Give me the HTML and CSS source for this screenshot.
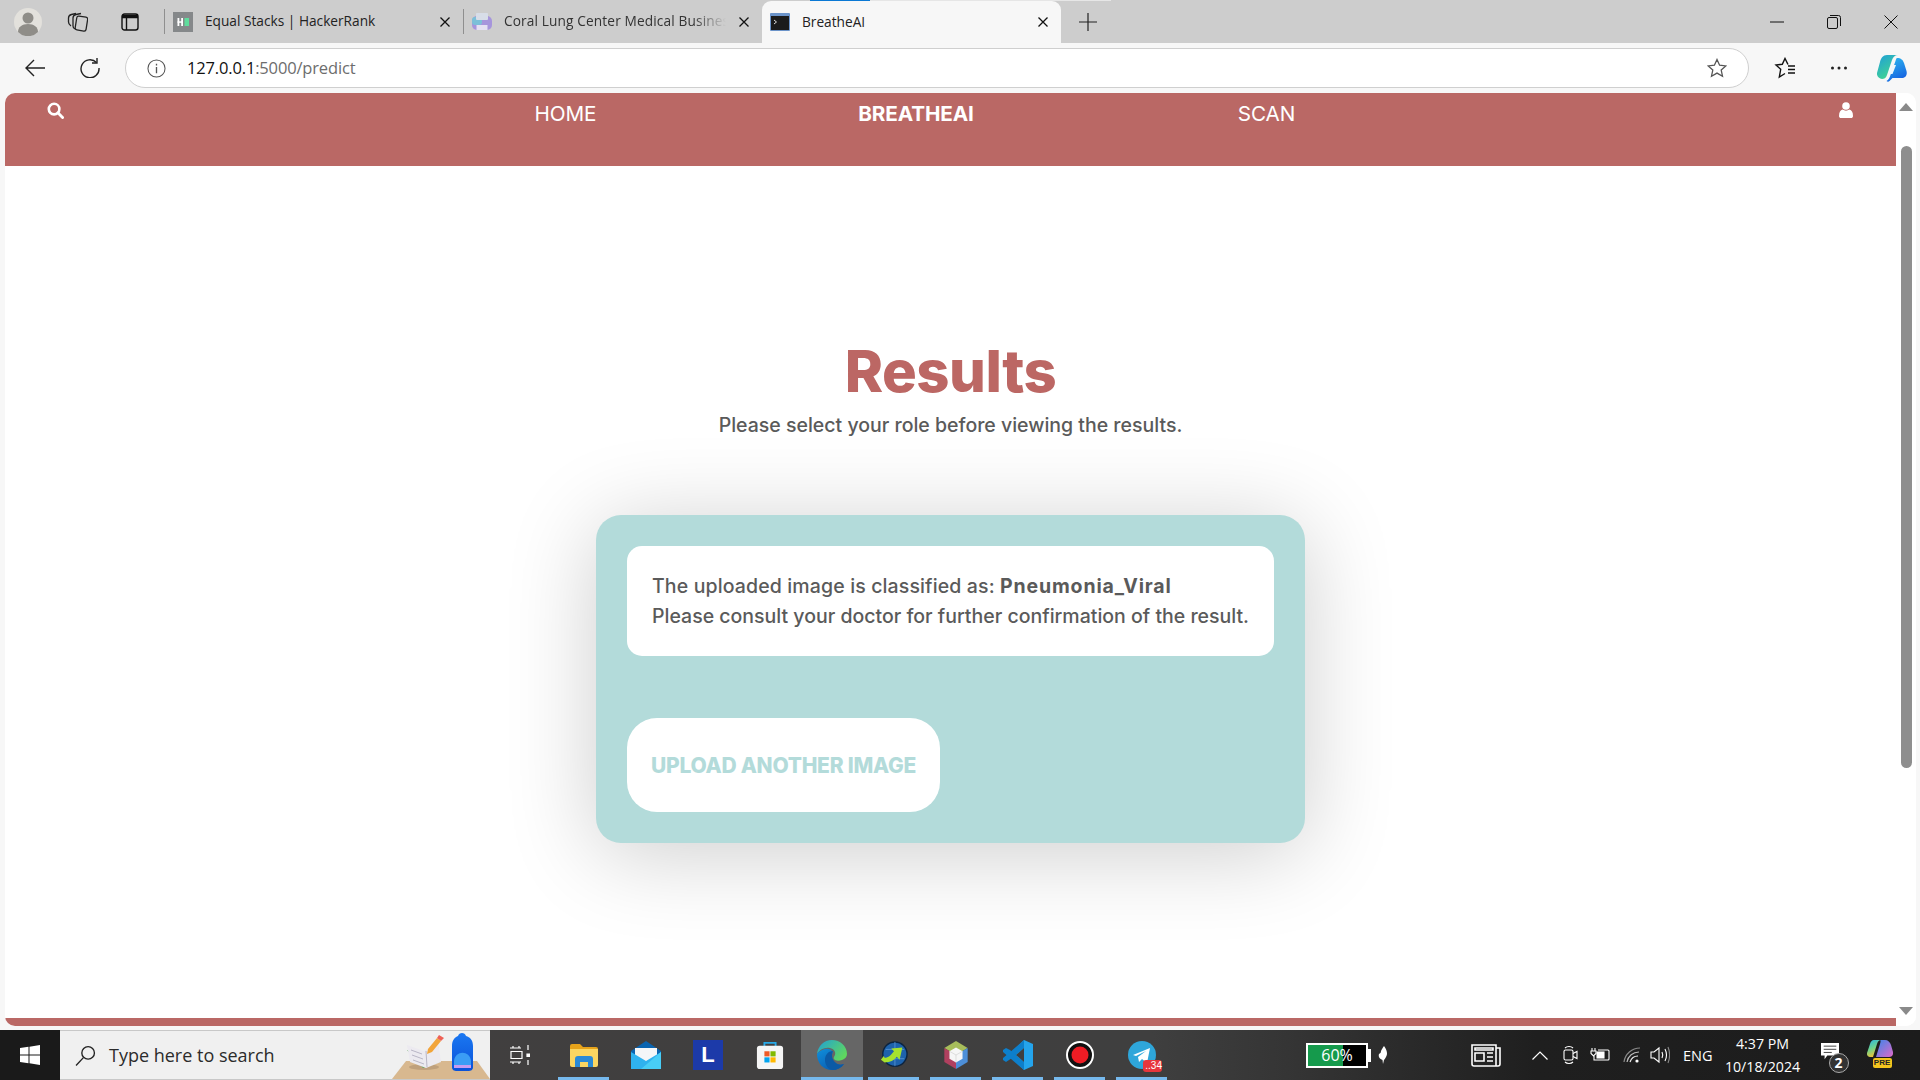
FILE: index.html
```html
<!DOCTYPE html>
<html lang="en">
<head>
<meta charset="utf-8">
<title>BreatheAI</title>
<link rel="stylesheet" href="styles.css">
</head>
<body>
<svg class="defs" width="0" height="0">
  <defs>
    <linearGradient id="cpL" x1="0" y1="0" x2="0.6" y2="1"><stop offset="0" stop-color="#1f9fd8"/><stop offset="1" stop-color="#43d690"/></linearGradient>
    <linearGradient id="cpR" x1="0.2" y1="0" x2="0.6" y2="1"><stop offset="0" stop-color="#2bb6ef"/><stop offset="1" stop-color="#1660e0"/></linearGradient>
    <linearGradient id="edgeA" x1="0" y1="0" x2="1" y2="0.6"><stop offset="0" stop-color="#1fa0d8"/><stop offset="1" stop-color="#5fd75f"/></linearGradient>
    <linearGradient id="edgeB" x1="0" y1="0" x2="0.7" y2="1"><stop offset="0" stop-color="#0f8fdc"/><stop offset="1" stop-color="#0a5cb0"/></linearGradient>
    <linearGradient id="pkB" x1="0" y1="0" x2="0" y2="1"><stop offset="0" stop-color="#1b78f2"/><stop offset="1" stop-color="#0a52d8"/></linearGradient>
    <linearGradient id="prL" x1="0" y1="0" x2="0.4" y2="1"><stop offset="0" stop-color="#27b3ea"/><stop offset="0.55" stop-color="#6fd38c"/><stop offset="1" stop-color="#f2c534"/></linearGradient>
    <linearGradient id="prR" x1="0" y1="0" x2="1" y2="1"><stop offset="0" stop-color="#3a86ec"/><stop offset="1" stop-color="#de6ac8"/></linearGradient>
  </defs>
</svg>
<header class="tabstrip">
  <div class="strip-tools">
    <svg class="ico-profile" viewBox="0 0 28 28"><circle cx="14" cy="14" r="14" fill="#e3e1dc"/><circle cx="14" cy="10" r="5.500" fill="#8f8d88"/><path d="M4 24c0-5 4-8 10-8s10 3 10 8a14 14 0 0 1-20 0z" fill="#8f8d88"/></svg>
    <svg class="ico-collections" viewBox="0 0 21 20" fill="none" stroke="#222" stroke-width="1.300"><rect x="9" y="4.500" width="11" height="14" rx="2" transform="rotate(9 14 11)"/><path d="M8 17c-1-.5-2-1.500-2-3V6c0-2 1-3 3-3.500l5-1"/><path d="M4 14c-1.500-1-2.500-2-2.500-4V6c0-2 1-3 3-3.500l4.500-1"/></svg>
    <svg class="ico-vtabs" viewBox="0 0 18 18" fill="none" stroke="#111" stroke-width="1.400"><rect x="1" y="1" width="16" height="16" rx="2.500"/><path d="M1 3.500h16" stroke-width="3.500"/><path d="M5.500 5v12"/></svg>
    <span class="tab-sep"></span>
  </div>
  <div class="tab">
    <svg class="favicon" viewBox="0 0 20 20"><rect width="20" height="20" fill="#85888a"/><rect x="4.500" y="6" width="1.800" height="8" fill="#fff"/><rect x="8.200" y="6" width="1.800" height="8" fill="#fff"/><rect x="4.500" y="9.300" width="5" height="1.500" fill="#fff"/><rect x="11.500" y="6" width="4.500" height="8" fill="#5fdc9c"/></svg>
    <span class="tab-title">Equal Stacks | HackerRank</span>
    <svg class="tab-x" viewBox="0 0 12 12"><path d="M1.500 1.500l9 9M10.500 1.500l-9 9" stroke="#111" stroke-width="1.300"/></svg>
  </div>
  <span class="tab-sep"></span>
  <div class="tab tab-second">
    <svg class="favicon" viewBox="0 0 20 20"><rect y="4" width="20" height="14" rx="5" fill="#a695dc"/><rect x="0" y="5" width="10" height="8" rx="3" fill="#7cc0d8"/><rect x="4" y="1" width="12" height="7" rx="1" fill="#d7dde8"/><rect x="4.500" y="13" width="11" height="5" fill="#e4e0f2"/></svg>
    <span class="tab-title tab-title-fade">Coral Lung Center Medical Business</span>
    <svg class="tab-x" viewBox="0 0 12 12"><path d="M1.500 1.500l9 9M10.500 1.500l-9 9" stroke="#111" stroke-width="1.300"/></svg>
  </div>
  <div class="tab tab-active">
    <span class="loader"></span>
    <svg class="favicon" viewBox="0 0 20 20"><rect y="1" width="20" height="18" rx="1" fill="#6b93c9"/><rect x="1" y="4" width="18" height="14" fill="#1b1b1b"/><path d="M4 8l2.500 2L4 12" stroke="#ddd" fill="none"/></svg>
    <span class="tab-title">BreatheAI</span>
    <svg class="tab-x" viewBox="0 0 12 12"><path d="M1.500 1.500l9 9M10.500 1.500l-9 9" stroke="#111" stroke-width="1.300"/></svg>
  </div>
  <svg class="ico-plus" viewBox="0 0 18 18"><path d="M9 0v18M0 9h18" stroke="#222" stroke-width="1.200"/></svg>
  <div class="win-controls">
    <svg class="win-ico" viewBox="0 0 14 14"><path d="M0 7h14" stroke="#111" stroke-width="1"/></svg>
    <svg class="win-ico" viewBox="0 0 14 14" fill="none" stroke="#111"><rect x=".5" y="2.500" width="10" height="11" rx="1.500"/><path d="M3 .5h8.500a2 2 0 0 1 2 2V11"/></svg>
    <svg class="win-ico" viewBox="0 0 14 14"><path d="M.5.500l13 13M13.500.5l-13 13" stroke="#111"/></svg>
  </div>
</header>

<div class="toolbar">
  <svg class="tb-ico back" viewBox="0 0 20 20" fill="none" stroke="#222" stroke-width="1.400"><path d="M20 10H1M9 2l-8 8 8 8"/></svg>
  <svg class="tb-ico refresh" viewBox="0 0 20 20" fill="none" stroke="#222" stroke-width="1.400"><path d="M16.500 4.500A9 9 0 1 0 19 10"/><path d="M17 0v5h-5"/></svg>
  <div class="address">
    <svg class="info" viewBox="0 0 20 20" fill="none" stroke="#555" stroke-width="1.100"><circle cx="10" cy="10" r="9"/><path d="M10 8.500V15M10 5v1.800" stroke-width="1.400"/></svg>
    <span class="url"><span class="url-host">127.0.0.1</span>:5000/predict</span>
    <svg class="star" viewBox="0 0 20 20" fill="none" stroke="#555" stroke-width="1.300"><path d="M10 1.500l2.600 5.700 6.200.7-4.600 4.200 1.300 6.100-5.500-3.100-5.500 3.100 1.300-6.100L1.200 7.900l6.200-.7z"/></svg>
  </div>
  <svg class="tb-ico favs" viewBox="0 0 22 22" fill="none" stroke="#111" stroke-width="1.400"><path d="M14 7.500L11 1.500 8.300 7.300 2 8l4.700 4.300L5.300 20l5.700-3.500M14 9h7M14 12.500h7M14 16h7"/></svg>
  <svg class="tb-ico more" viewBox="0 0 20 20" fill="#222"><circle cx="3.500" cy="10" r="1.500"/><circle cx="10" cy="10" r="1.500"/><circle cx="16.500" cy="10" r="1.500"/></svg>
  <svg class="tb-ico copilot" viewBox="0 0 30 27">
    <path d="M10 0h11c-3 0-5 2-6 5l-5 15c-1 3-3 4-5 4-3 0-5.500-3-5-6L3 7c1-4 3-7 7-7z" fill="url(#cpL)"/>
    <path d="M20 3c4 0 6 2 7 5l2.500 8c1 4-1 7-5 7h-9l-3 3c-1 1-2 1-3 0 2-1 3-3 4-6l5-14c.5-2 1-3 1.500-3z" fill="url(#cpR)"/>
    <path d="M15 10h4l-3.500 9h-4z" fill="#eef8fc"/>
  </svg>
</div>

<div class="page">
  <div class="content">
    <nav class="nav">
      <span class="nav-cell nav-search">
        <svg class="nav-ico" viewBox="0 0 18 18" fill="none" stroke="#fff" stroke-width="2.800"><circle cx="7.500" cy="7.500" r="5.600"/><path d="M11.500 11.500l5 5" stroke-linecap="round" stroke-width="3"/></svg>
      </span>
      <a class="nav-link">HOME</a>
      <a class="nav-link nav-brand">BREATHEAI</a>
      <a class="nav-link">SCAN</a>
      <span class="nav-cell nav-user">
        <svg class="nav-ico-user" viewBox="0 0 14 16" fill="#fff"><circle cx="7" cy="4" r="3.800"/><path d="M0 14c0-4 1.500-6 3.500-6.500 2 1.500 5 1.500 7 0C12.500 8 14 10 14 14c0 1.500-1 2-2 2H2c-1 0-2-.5-2-2z"/></svg>
      </span>
    </nav>
    <main class="main">
      <h1 class="title">Results</h1>
      <p class="subtitle">Please select your role before viewing the results.</p>
      <section class="card">
        <div class="result">
          <p class="result-line result-lead">The uploaded image is classified as: <strong class="result-strong">Pneumonia_Viral</strong></p>
          <p class="result-line">Please consult your doctor for further confirmation of the result.</p>
        </div>
        <a class="upload-btn">UPLOAD ANOTHER IMAGE</a>
      </section>
    </main>
    <div class="footer-band"></div>
  </div>
  <aside class="scrollbar">
    <span class="arrow-up"></span>
    <span class="thumb"></span>
    <span class="arrow-down"></span>
  </aside>
</div>

<footer class="taskbar">
  <div class="start">
    <svg class="win-logo" viewBox="0 0 20 20" fill="#fff"><path d="M0 3l8.500-1.200V9.500H0zM9.500 1.700L20 0v9.500H9.500zM0 10.500h8.500v7.700L0 17zM9.500 10.500H20V20L9.500 18.300z"/></svg>
  </div>
  <div class="search">
    <svg class="search-ico" viewBox="0 0 20 20" fill="none" stroke="#222" stroke-width="1.300"><circle cx="12.500" cy="7.500" r="6"/><path d="M8 12l-7 7.500"/></svg>
    <span class="search-text">Type here to search</span>
    <svg class="search-art" viewBox="0 0 98 49">
      <path d="M0 49l14-18h71l13 18z" fill="#d8b88f"/>
      <ellipse cx="32" cy="37" rx="15" ry="3" fill="#bfa07c"/>
      <path d="M15 20l16 18 17-6-2-16-15 10z" fill="#5aa35a"/>
      <path d="M15 15l17 6 14-9 3 20-15 6-16-6z" fill="#eceaf0"/>
      <path d="M34 21l1 16M19 20l11 4M20 25l11 4M21 30l11 4" stroke="#b9b6c6" stroke-width="1"/>
      <path d="M36 19l9-11 4 3-9 11-5 2z" fill="#f2a53a"/>
      <path d="M45 8l2-3 5 3-3 3z" fill="#ee6055"/>
      <path d="M60 16c0-6 3-9 6-10 1-4 7-4 8 0 4 1 7 4 7 10v21c0 3-2 4-5 4H65c-3 0-5-1-5-4z" fill="url(#pkB)"/>
      <path d="M62 31c1-11 16-11 17 0v6H62z" fill="#3b9df5"/>
      <path d="M62 35h17v3H62z" fill="#c79cf0"/>
    </svg>
  </div>
  <div class="task-btn task-view">
    <svg class="ico-taskview" viewBox="0 0 20 20" fill="none" stroke="#fff" stroke-width="1.200"><path d="M0 3h11M3 1v2M9 1v2M1 6.500h11v7H1zM0 17h11M3 17v2M9 17v2M18 0v5M18 15v5"/><path d="M17 9h3v2.500h-3z" fill="#fff"/></svg>
  </div>
  <div class="task-btn running">
    <svg class="ico-folder" viewBox="0 0 28 23"><path d="M0 2a2 2 0 0 1 2-2h8l3 3h13a2 2 0 0 1 2 2v3H0z" fill="#e7a31a"/><path d="M0 5h28v16a2 2 0 0 1-2 2H2a2 2 0 0 1-2-2z" fill="#fbd661"/><path d="M5 23v-8a3 3 0 0 1 3-3h12a3 3 0 0 1 3 3v8h-5v-5h-8v5z" fill="#2a8ad6"/></svg>
  </div>
  <div class="task-btn">
    <svg class="ico-mail" viewBox="0 0 30 28"><path d="M0 10L15 0l15 10v18H0z" fill="#0a64b0"/><path d="M4 7h22v10L15 23 4 17z" fill="#f4f6f8"/><path d="M0 11l15 9 15-9v17H0z" fill="#2fb2ef"/><path d="M30 11v17H10z" fill="#48cdf6"/></svg>
  </div>
  <div class="task-btn">
    <span class="l-tile">L</span>
  </div>
  <div class="task-btn">
    <svg class="app-ico" viewBox="0 0 28 30"><path d="M8 6V2h12v4" fill="none" stroke="#27a9e8" stroke-width="2"/><rect y="5" width="28" height="25" rx="3" fill="#f5f5f5"/><rect x="8" y="11" width="5.500" height="5.500" fill="#ef5a27"/><rect x="14.500" y="11" width="5.500" height="5.500" fill="#80ba01"/><rect x="8" y="17.500" width="5.500" height="5.500" fill="#02a4ef"/><rect x="14.500" y="17.500" width="5.500" height="5.500" fill="#ffb902"/></svg>
  </div>
  <div class="task-btn running active">
    <svg class="ico-edge" viewBox="0 0 30 30">
      <path d="M15 0C7 0 1 6 0 14c3-5 8-7 13-6 4 1 6 4 5 7-1 2-2 3-1 4 1 2 5 2 8 1 3-1 5-3 5-6C30 6 23 0 15 0z" fill="url(#edgeA)"/>
      <path d="M0 14c0 9 6 16 15 16 5 0 9-2 12-6-2 1-5 1-7 0-4-2-7-7-4-12-2-3-5-4-8-3-4 1-7 3-8 5z" fill="url(#edgeB)"/>
      <path d="M8 20c0-5 3-9 8-9-2 4-1 9 3 12 2 2 5 2 8 1-3 4-7 6-12 6-4-1-7-5-7-10z" fill="#0b5aa6"/>
    </svg>
  </div>
  <div class="task-btn running">
    <svg class="app-ico" viewBox="0 0 28 30"><circle cx="15" cy="14" r="13" fill="#1d62ac"/><circle cx="15" cy="14" r="13" fill="none" stroke="#0c2440" stroke-width="1.500"/><path d="M5 9h20M5 19h20M15 1v26" stroke="#5f9ad6" stroke-width=".8"/><path d="M0 20l4 3c6 0 10-2 13-6l3 3 3-13-12 1 3 3c-3 4-6 7-10 7l-1-2z" fill="#a6e22e"/></svg>
  </div>
  <div class="task-btn running">
    <svg class="app-ico" viewBox="0 0 27 30"><path d="M13.500 0L26 7.500 13.500 15 1 7.500z" fill="#a7bd5b"/><path d="M1 7.500l12.500 7.500v15L1 22.500z" fill="#b0405f"/><path d="M26 7.500L13.500 15v15L26 22.500z" fill="#4d8fd8"/><path d="M13.500 7l7 4v8l-7 4-7-4v-8z" fill="#f6f6f6"/><path d="M6.500 11l7 4 7-4M13.500 15v8" stroke="#d0d0d0" fill="none" stroke-width=".7"/></svg>
  </div>
  <div class="task-btn running">
    <svg class="ico-vs" viewBox="0 0 30 30"><path d="M21 0l-8 8 0 14 8 8 9-4V4z" fill="#24a4ec"/><path d="M21 0v8L9 18l-6 4-3-2v-2l6-5 15-13z" fill="#0d7fcb"/><path d="M3 8L0 10v2l15 13 6 5v-8L7 10z" fill="#0d7fcb"/><path d="M21 8l-8 7 8 7z" fill="#3f3f3f"/></svg>
  </div>
  <div class="task-btn running">
    <svg class="app-ico" viewBox="0 0 28 28"><circle cx="14" cy="14" r="13" fill="#111" stroke="#fff" stroke-width="2"/><circle cx="14" cy="14" r="8.500" fill="#ee1c24"/></svg>
  </div>
  <div class="task-btn running tg">
    <svg class="app-ico" viewBox="0 0 28 28"><circle cx="14" cy="14" r="14" fill="#2ea6da"/><path d="M5 14l17-7-3 15-5-4-3 3-1-5 8-6-10 5z" fill="#fff"/></svg>
    <span class="tg-badge">..34</span>
  </div>
  <div class="taskbar-space"></div>
  <div class="tray">
    <div class="battery-wrap"><div class="battery"><span class="battery-text">60%</span></div><span class="battery-cap"></span></div>
    <svg class="tray-feather" viewBox="0 0 10 18" fill="#fff"><path d="M6 0c3 4 4 8 2 11-1 2-2 3-2 3l-1 4-.5-4C2 13 0 11 1 8c1-1 2-1 2-3 1-2 2-4 3-5z"/></svg>
    <svg class="tray-news" viewBox="0 0 30 24" fill="none" stroke="#fff" stroke-width="1.600"><path d="M1 2h24v21H3a2 2 0 0 1-2-2zM25 5h4v16a2 2 0 0 1-2 2h-2M4 5h18v2H4zM4 10h9v8H4zM16 10h6M16 14h6M16 18h6"/></svg>
    <svg class="tray-chev" viewBox="0 0 16 9" fill="none" stroke="#fff" stroke-width="1.200"><path d="M.5 8.500L8 1l7.500 7.500"/></svg>
    <svg class="tray-cam" viewBox="0 0 15 20" fill="none" stroke="#fff" stroke-width="1.100"><rect x="1" y="5" width="9" height="10" rx="1.500"/><path d="M10 8.500l4-2v7l-4-2M2 3c2-2 6-2 8 0M2 17c2 2 6 2 8 0"/></svg>
    <svg class="tray-bat" viewBox="0 0 20 14" fill="none" stroke="#fff" stroke-width="1.100"><path d="M8 2h10a1 1 0 0 1 1 1v8a1 1 0 0 1-1 1H4V8"/><rect x="7" y="4" width="7" height="6" fill="#fff"/><path d="M2 0v3M5 0v3M1 3h5v2.500L3.500 8 1 5.500z"/></svg>
    <svg class="tray-wifi" viewBox="0 0 18 16" fill="none" stroke="#8a8a8a" stroke-width="1.200"><path d="M1 15C2 7 9 1 17 1"/><path d="M4 15c1-6 6-10 12-10" stroke="#bbb"/><path d="M7 15c1-3 4-6 8-6" stroke="#eee"/><circle cx="14" cy="14" r="1.600" fill="#fff" stroke="none"/></svg>
    <svg class="tray-sound" viewBox="0 0 20 18" fill="none" stroke="#fff" stroke-width="1.100"><path d="M1 6h3l5-4v14l-5-4H1z"/><path d="M12 6c1 2 1 4 0 6M15 3c2 4 2 8 0 12"/><path d="M18 1c2 5 2 11 0 16" stroke="#888"/></svg>
    <span class="tray-lang">ENG</span>
    <div class="clock"><span class="clock-time">4:37 PM</span><span class="clock-date">10/18/2024</span></div>
    <div class="notify">
      <svg class="notify-ico" viewBox="0 0 20 20"><path d="M0 0h20v14H7l-3 4v-4H0z" fill="#fff"/><path d="M3 3.500h14M3 7h14M3 10.500h9" stroke="#333"/></svg>
      <span class="notify-badge">2</span>
    </div>
    <div class="copilot-pre">
      <svg class="copilot-ico" viewBox="0 0 26 20">
        <path d="M7 0h7c-2 0-3 1-4 4L6 17H3c-2 0-3.500-2-3-4L3 4c.5-2 2-4 4-4z" fill="url(#prL)"/>
        <path d="M13 0h5c3 0 5 2 6 5l2 7c.5 3-1 5-4 5H9l4-13c.5-2 1-4 0-4z" fill="url(#prR)"/>
      </svg>
      <span class="pre-tag">PRE</span>
    </div>
  </div>
</footer>
</body>
</html>
```

FILE: styles.css
```css
* { box-sizing: border-box; }
html, body { margin: 0; height: 100%; }
body {
  display: flex;
  flex-direction: column;
  height: 100vh;
  overflow: hidden;
  background: #f7f7f7;
  font-family: "Open Sans", "Noto Sans", sans-serif;
}
.defs { position: absolute; }

/* tab strip */
.tabstrip {
  height: 43px;
  flex: none;
  display: flex;
  align-items: center;
  background: #cdcdcd;
}
.strip-tools { display: flex; align-items: center; padding-left: 14px; }
.ico-profile { width: 28px; height: 28px; }
.ico-collections { width: 21px; height: 20px; margin-left: 25px; }
.ico-vtabs { width: 18px; height: 18px; margin-left: 33px; }
.strip-tools .tab-sep { margin-left: 25px; margin-right: 7px; }
.tab-sep { width: 1px; height: 25px; background: #8f8f8f; flex: none; }
.tab {
  width: 291px;
  height: 43px;
  flex: none;
  display: flex;
  align-items: center;
  position: relative;
  padding-left: 1px;
}
.tab-second { padding-left: 8px; width: 298px; }
.tab-active {
  width: 299px;
  height: 42px;
  margin-top: 1px;
  background: #f7f7f7;
  border-radius: 9px 9px 0 0;
  padding-left: 8px;
}
.favicon { width: 20px; height: 20px; flex: none; }
.tab-title { margin-left: 12px; padding-bottom: 2px; font-size: 13.700px; color: #222; white-space: nowrap; flex: 1; min-width: 0; overflow: hidden; }
.tab-title-fade { color: #333; letter-spacing: .12px; -webkit-mask-image: linear-gradient(90deg, #000 85%, transparent 100%); mask-image: linear-gradient(90deg, #000 85%, transparent 100%); margin-right: 12px; }
.tab-x { width: 12px; height: 12px; flex: none; margin-right: 12px; }
.loader {
  position: absolute;
  left: 48px;
  top: -1px;
  width: 301px;
  height: 1px;
  background: linear-gradient(90deg, #0a78d4 0 60px, #e6e6e6 60px);
}
.ico-plus { width: 18px; height: 18px; margin-left: 18px; }
.win-controls { margin-left: auto; display: flex; align-items: center; gap: 43px; padding-right: 22px; }
.win-ico { width: 14px; height: 14px; }

/* toolbar */
.toolbar {
  height: 50px;
  flex: none;
  display: flex;
  align-items: center;
  background: #f7f7f7;
  padding-left: 25px;
}
.tb-ico { flex: none; }
.back { width: 20px; height: 20px; }
.refresh { width: 20px; height: 20px; margin-left: 35px; }
.address {
  width: 1624px;
  height: 40px;
  margin-left: 25px;
  flex: none;
  display: flex;
  align-items: center;
  background: #fff;
  border: 1px solid #cfcfcf;
  border-radius: 20px;
  padding: 0 21px 0 21px;
}
.info { width: 19px; height: 19px; flex: none; }
.url { margin-left: 21px; padding-bottom: 2px; font-size: 16.500px; color: #6d6d6d; letter-spacing: -.16px; }
.url-host { color: #111; }
.star { width: 20px; height: 20px; margin-left: auto; }
.favs { width: 22px; height: 22px; margin-left: 25px; }
.more { width: 20px; height: 20px; margin-left: 33px; }
.copilot { width: 30px; height: 27px; margin-left: 28px; }

/* page */
.page {
  flex: 1;
  min-height: 0;
  margin: 0 4px 4px 5px;
  display: flex;
  background: #fff;
  border-radius: 10px;
  overflow: hidden;
}
.content { flex: 1; min-width: 0; display: flex; flex-direction: column; }
.nav {
  height: 73px;
  flex: none;
  display: grid;
  grid-template-columns: 385px 351px 350px 351px 1fr;
  align-items: start;
  background: #ba6865;
  color: #fff;
  font-family: Inter, "Liberation Sans", sans-serif;
}
.nav-cell { display: flex; }
.nav-search { padding: 9px 0 0 42px; }
.nav-user { justify-content: flex-end; padding: 9px 43px 0 0; }
.nav-ico { width: 17px; height: 17px; }
.nav-ico-user { width: 14px; height: 16px; }
.nav-link { text-align: center; font-size: 20.700px; line-height: 26px; padding-top: 8px; letter-spacing: -.1px; }
.nav-brand { font-weight: 700; letter-spacing: -.1px; }

.main { flex: 1; min-height: 0; display: flex; flex-direction: column; align-items: center; font-family: Inter, "Liberation Sans", sans-serif; }
.title {
  margin: 170px 0 0;
  font-size: 58px;
  line-height: 70px;
  font-weight: 800;
  color: #bc6764;
  letter-spacing: -.5px;
}
.subtitle { margin: 5px 0 0; font-size: 19.500px; line-height: 28px; color: #5a5a5a; font-weight: 500; }
.card {
  width: 709px;
  height: 328px;
  margin-top: 76px;
  padding: 31px;
  background: #b3dbda;
  border-radius: 25px;
  box-shadow: 0 10px 90px rgba(0, 0, 0, .2);
  display: flex;
  flex-direction: column;
  align-items: flex-start;
}
.result { width: 100%; height: 110px; padding: 25px; background: #fff; border-radius: 15px; }
.result-line { margin: 0; font-size: 19.500px; line-height: 30px; color: #5a5a5a; font-weight: 500; white-space: nowrap; }
.result-lead { letter-spacing: .13px; }
.result-strong { font-weight: 700; letter-spacing: .85px; }
.upload-btn {
  width: 313px;
  height: 94px;
  margin-top: 62px;
  display: flex;
  align-items: center;
  justify-content: center;
  background: #fff;
  border-radius: 30px;
  color: #b3dbda;
  font-size: 21px;
  font-weight: 800;
  letter-spacing: -.25px;
  white-space: nowrap;
}
.footer-band { height: 8px; flex: none; background: #ba6865; }

.scrollbar {
  width: 20px;
  flex: none;
  display: flex;
  flex-direction: column;
  align-items: center;
  background: #fff;
  padding: 10px 0 11px;
}
.arrow-up, .arrow-down { width: 0; height: 0; border-left: 7px solid transparent; border-right: 7px solid transparent; flex: none; }
.arrow-up { border-bottom: 8px solid #8a8a8a; }
.arrow-down { border-top: 8px solid #8a8a8a; margin-top: auto; }
.thumb { width: 11px; height: 622px; margin-top: 35px; background: #8e8e8e; border-radius: 6px; flex: none; }

/* taskbar */
.taskbar {
  height: 50px;
  flex: none;
  display: flex;
  align-items: stretch;
  background: linear-gradient(90deg, #423f3f 0, #3f3f3f 60%, #353535 67%, #1f1f1f 80%, #1c1c1c 100%);
  color: #fff;
}
.start { width: 60px; display: flex; align-items: center; justify-content: center; background: #1a1a1a; }
.win-logo { width: 20px; height: 20px; }
.search {
  width: 430px;
  display: flex;
  align-items: center;
  position: relative;
  background: #f0f0f0;
  border-top: 1px solid #c8c8c8;
  border-bottom: 1px solid #c8c8c8;
  padding-left: 15px;
}
.search-ico { width: 21px; height: 21px; flex: none; }
.search-text { margin-left: 13px; font-size: 18px; color: #2b2b2b; }
.search-art { position: absolute; right: 0; bottom: 0; width: 98px; height: 49px; }
.task-btn {
  width: 62px;
  display: flex;
  align-items: center;
  justify-content: center;
  position: relative;
  flex: none;
}
.task-view { width: 63px; padding-right: 3px; }
.task-btn.running::after {
  content: "";
  position: absolute;
  left: 5px;
  right: 6px;
  bottom: 0;
  height: 3px;
  background: #76b9ed;
}
.task-btn.active { background: #666; }
.task-btn.active::after { left: 0; right: 0; }
.app-ico { width: 28px; height: 28px; }
.ico-taskview { width: 20px; height: 20px; }
.ico-folder { width: 28px; height: 23px; }
.ico-mail { width: 30px; height: 28px; }
.ico-edge { width: 30px; height: 30px; }
.ico-vs { width: 30px; height: 30px; }
.l-tile {
  width: 30px;
  height: 30px;
  display: flex;
  align-items: center;
  justify-content: center;
  background: #1c3aa9;
  color: #fff;
  font: 700 22px "Liberation Sans", sans-serif;
}
.tg-badge {
  position: absolute;
  left: 32px;
  top: 30px;
  width: 19px;
  height: 12px;
  background: #e7363c;
  border-radius: 3px;
  color: #fff;
  font: 10px/12px "Liberation Sans", sans-serif;
  text-align: right;
  white-space: nowrap;
}
.taskbar-space { flex: 1; }
.tray { width: 614px; flex: none; display: flex; align-items: center; position: relative; }
.battery-wrap { display: flex; align-items: center; }
.battery {
  width: 62px;
  height: 25px;
  background: linear-gradient(90deg, #159a4c 0 60%, #000 60%);
  border: 2px solid #fff;
  display: flex;
  align-items: center;
  justify-content: center;
}
.battery-text { font-size: 16px; color: #fff; }
.battery-cap { width: 3px; height: 13px; background: #fff; }
.tray-feather { width: 10px; height: 18px; margin-left: 7px; }
.tray-news { width: 30px; height: 24px; margin-left: 83px; }
.tray-chev { width: 16px; height: 9px; margin-left: 31px; }
.tray-cam { width: 15px; height: 20px; margin-left: 15px; }
.tray-bat { width: 20px; height: 14px; margin-left: 12px; }
.tray-wifi { width: 18px; height: 16px; margin-left: 13px; }
.tray-sound { width: 20px; height: 18px; margin-left: 9px; }
.tray-lang { margin-left: 13px; font-size: 14.500px; }
.clock { width: 80px; margin-left: 10px; display: flex; flex-direction: column; align-items: center; font-size: 14.200px; line-height: 23px; white-space: nowrap; }
.notify { position: relative; width: 30px; height: 30px; margin-left: 17px; }
.notify-ico { position: absolute; left: 0; top: 3px; width: 20px; height: 18px; }
.notify-badge {
  position: absolute;
  left: 9px;
  top: 13px;
  width: 20px;
  height: 20px;
  border-radius: 50%;
  background: #333;
  border: 1px solid #aaa;
  font: 700 14px/18px "Open Sans", sans-serif;
  text-align: center;
}
.copilot-pre { position: relative; width: 26px; height: 30px; margin-left: 17px; margin-right: 0; }
.copilot-ico { position: absolute; left: 0; top: 0; width: 26px; height: 20px; }
.pre-tag {
  position: absolute;
  left: 6px;
  top: 18px;
  width: 19px;
  height: 10px;
  background: #f3c41e;
  color: #222;
  border-radius: 2px;
  font: 700 8px/10px "Liberation Sans", sans-serif;
  text-align: center;
}
```
